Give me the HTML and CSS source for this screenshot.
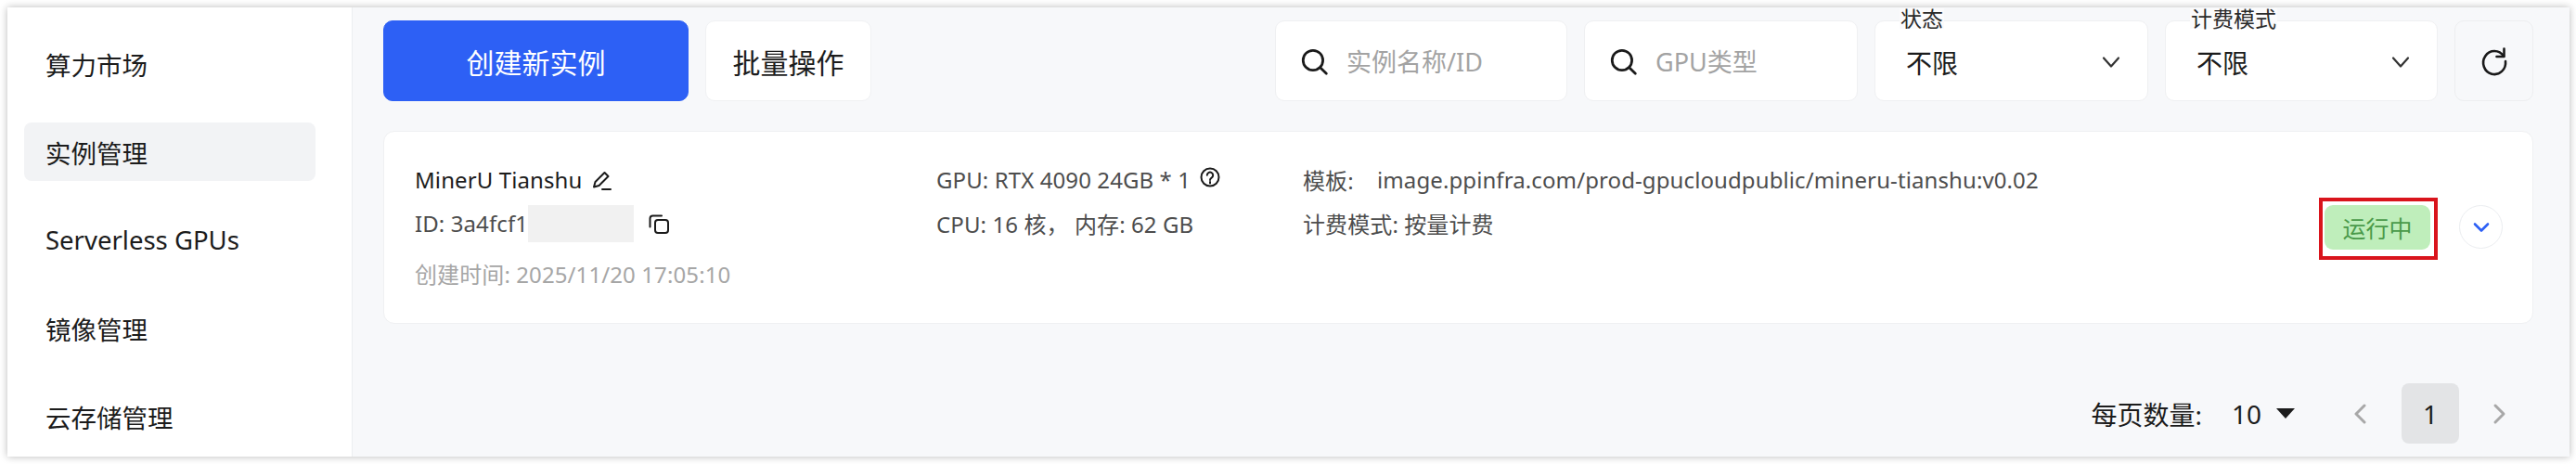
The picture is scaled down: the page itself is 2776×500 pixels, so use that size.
FILE: index.html
```html
<!DOCTYPE html>
<html>
<head>
	<meta charset="utf-8">
	<title>实例管理</title>
	<link rel="stylesheet" href="styles.css">
</head>
<body>
	<div class="window">
		<nav class="sidebar">
			<a class="nav-item">算力市场</a>
			<a class="nav-item active">实例管理</a>
			<a class="nav-item">Serverless GPUs</a>
			<a class="nav-item">镜像管理</a>
			<a class="nav-item">云存储管理</a>
		</nav>
		<main class="main">
			<div class="toolbar">
				<button class="btn btn-primary">创建新实例</button>
				<button class="btn btn-plain">批量操作</button>
				<div class="spacer"></div>
				<div class="field search search-name">
					<svg class="icon" width="32" height="32" viewBox="0 0 30 30"><circle cx="14" cy="14" r="10" /><path d="M21.500 21.500l6 6" /></svg>
					<span class="placeholder">实例名称/ID</span>
				</div>
				<div class="field search search-gpu">
					<svg class="icon" width="32" height="32" viewBox="0 0 30 30"><circle cx="14" cy="14" r="10" /><path d="M21.500 21.500l6 6" /></svg>
					<span class="placeholder">GPU类型</span>
				</div>
				<div class="field select select-state">
					<span class="select-label">状态</span>
					<span class="select-value">不限</span>
					<svg class="icon chevron" width="22" height="14" viewBox="0 0 22 14"><path d="M3 2.500l8 9 8-9" /></svg>
				</div>
				<div class="field select select-billing">
					<span class="select-label">计费模式</span>
					<span class="select-value">不限</span>
					<svg class="icon chevron" width="22" height="14" viewBox="0 0 22 14"><path d="M3 2.500l8 9 8-9" /></svg>
				</div>
				<button class="btn btn-refresh">
					<svg class="icon" width="34" height="34" viewBox="0 0 34 34"><path d="M27 11.500A12 12.500 0 1 0 29 17" /><path d="M27.500 3.500v8.500h-8" /></svg>
				</button>
			</div>

			<div class="card">
				<div class="col col-info">
					<div class="row">
						<span class="name">MinerU Tianshu</span>
						<svg class="icon small edit" width="24" height="24" viewBox="0 0 24 24"><path d="M4 18.500l1.500-5.500L15.500 3l4 4-10 10z" /><path d="M13 21h9" /></svg>
					</div>
					<div class="row muted">
						<span>ID: 3a4fcf1</span>
						<span class="mask"></span>
						<svg class="icon small copy" width="24" height="24" viewBox="0 0 24 24"><rect x="8" y="8" width="14" height="14" rx="3" /><path d="M15 3.500H5.500A3 3 0 0 0 2.500 6.500v9" /></svg>
					</div>
					<div class="row created">创建时间: 2025/11/20 17:05:10</div>
				</div>
				<div class="col col-spec">
					<div class="row muted">
						<span>GPU: RTX 4090 24GB * 1</span>
						<svg class="icon small help" width="22" height="22" viewBox="0 0 22 22"><circle cx="11" cy="11" r="9.500" /><path d="M7.800 8.800a3.200 3.200 0 1 1 4.800 2.800c-1 .6-1.600 1.100-1.600 2.400" /><path d="M11 16v1.500" /></svg>
					</div>
					<div class="row muted">CPU: 16 核， 内存: 62 GB</div>
				</div>
				<div class="col col-tpl">
					<div class="row muted">
						<span class="tpl-label">模板:</span>
						<span>image.ppinfra.com/prod-gpucloudpublic/mineru-tianshu:v0.02</span>
					</div>
					<div class="row muted">计费模式: 按量计费</div>
				</div>
				<div class="highlight">
					<span class="badge">运行中</span>
				</div>
				<button class="expand">
					<svg width="20" height="12" viewBox="0 0 20 12"><path d="M3 2.500l7 7 7-7" /></svg>
				</button>
			</div>

			<div class="pager">
				<span class="pager-label">每页数量:</span>
				<span class="pager-size">10</span>
				<span class="caret"></span>
				<svg class="arrow arrow-prev" width="16" height="24" viewBox="0 0 16 24"><path d="M13 3L4 12l9 9" /></svg>
				<span class="page-num">1</span>
				<svg class="arrow arrow-next" width="16" height="24" viewBox="0 0 16 24"><path d="M3 3l9 9-9 9" /></svg>
			</div>
		</main>
	</div>
</body>
</html>
```
FILE: styles.css
```css
html,body{
	margin: 0;
	padding: 0;
}
body{
	width: 2776px;
	height: 500px;
	padding: 8px 7px 8px 8px;
	box-sizing: border-box;
	background-color: #fff;
	overflow: hidden;
}
*{
	font-family: "Noto Sans", "Noto Sans CJK SC", sans-serif;
}
.window{
	display: flex;
	height: 484px;
	box-shadow: 0 0 8px rgba(0,0,0,0.28);
	background-color: #f7f8fa;
}
.sidebar{
	width: 372px;
	box-sizing: border-box;
	flex: none;
	padding: 29px 39px 0 18px;
	background-color: #fff;
	border-right: 1px solid #eceef0;
	display: flex;
	flex-direction: column;
	gap: 32px;
	overflow: hidden;
}
.nav-item{
	display: flex;
	flex: none;
	align-items: center;
	height: 63px;
	padding-left: 23px;
	border-radius: 8px;
	font-size: 27.500px;
	color: #1c1c1c;
}
.active{
	background-color: #f2f3f5;
}
.main{
	flex: 1;
	min-width: 0;
	padding: 14px 39px 0 33px;
	display: flex;
	flex-direction: column;
}
.toolbar{
	display: flex;
	align-items: stretch;
	height: 87px;
}
.spacer{
	flex: 1;
}
.btn{
	border: 1px solid #f0f1f3;
	border-radius: 10px;
	background-color: #fff;
	padding: 0;
	font-size: 30px;
	color: #1c1c1c;
}
.btn-primary{
	width: 329px;
	background-color: #2d60f5;
	border-color: #2d60f5;
	color: #fff;
}
.btn-plain{
	width: 179px;
	margin-left: 18px;
}
.btn-refresh{
	width: 85px;
	margin-left: 18px;
	background-color: #f7f8fa;
	border-color: #edeef0;
	display: flex;
	align-items: center;
	justify-content: center;
}
.field{
	position: relative;
	display: flex;
	align-items: center;
	box-sizing: border-box;
	background-color: #fff;
	border: 1px solid #eff0f2;
	border-radius: 10px;
}
.search{
	padding-left: 25px;
	gap: 19px;
}
.search-name{
	width: 315px;
}
.search-gpu{
	width: 295px;
	margin-left: 18px;
}
.placeholder{
	font-size: 27px;
	color: #a3a3a3;
}
.select{
	margin-left: 18px;
	padding: 2px 28px 0 33px;
	justify-content: space-between;
}
.select-state{
	width: 295px;
}
.select-billing{
	width: 294px;
}
.select-label{
	position: absolute;
	left: 26px;
	top: -14px;
	padding: 0 1px;
	line-height: 22px;
	font-size: 23px;
	color: #2a2a2a;
	background-color: #fbfbfc;
}
.select-value{
	font-size: 28px;
	color: #1c1c1c;
}
.icon{
	flex: none;
	fill: none;
	stroke: #1a1a1a;
	stroke-width: 2.6;
	stroke-linecap: round;
	stroke-linejoin: round;
}
.small{
	stroke-width: 2;
}
.chevron{
	stroke: #333;
	stroke-width: 2.2;
}
.card{
	display: flex;
	align-items: flex-start;
	box-sizing: border-box;
	height: 208px;
	margin-top: 32px;
	padding: 28px 32px 0 33px;
	background-color: #fff;
	border: 1px solid #eff0f2;
	border-radius: 12px;
}
.col{
	flex: none;
}
.col-info{
	width: 562px;
}
.col-spec{
	width: 395px;
}
.col-tpl{
	flex: 1;
}
.row{
	display: flex;
	align-items: center;
	height: 47px;
	font-size: 24px;
	letter-spacing: 0.1px;
	color: #555;
	white-space: nowrap;
}
.muted{
	color: #4d4d4d;
}
.name{
	color: #1c1c1c;
}
.edit{
	margin-left: 9px;
	margin-top: 3px;
}
.mask{
	width: 114px;
	height: 40px;
	background-color: #f1f1f1;
}
.copy{
	margin-left: 15px;
}
.help{
	margin-left: 10px;
	margin-top: -5px;
}
.created{
	margin-top: 7px;
	color: #a6a6a6;
}
.tpl-label{
	width: 80px;
}
.highlight{
	flex: none;
	margin-top: 43px;
	padding: 4px 4px 7px 2px;
	border: 4px solid #d9141c;
	box-sizing: border-box;
	width: 128px;
	height: 67px;
}
.badge{
	display: flex;
	align-items: center;
	justify-content: center;
	height: 48px;
	border-radius: 9px;
	background-color: #bfeebb;
	font-size: 25px;
	color: #4a9a4a;
}
.expand{
	flex: none;
	width: 47px;
	height: 47px;
	margin: 51px 0 0 23px;
	padding: 0;
	border: 1px solid #ebedf0;
	border-radius: 50%;
	background-color: #fff;
	display: flex;
	align-items: center;
	justify-content: center;
}
.expand path{
	fill: none;
	stroke: #2d60f5;
	stroke-width: 2.6;
	stroke-linecap: round;
	stroke-linejoin: round;
}
.pager{
	display: flex;
	align-items: center;
	justify-content: flex-end;
	height: 65px;
	margin-top: 64px;
	font-size: 28px;
	color: #1c1c1c;
}
.pager-size{
	margin-left: 32px;
	font-size: 28px;
}
.caret{
	width: 0;
	height: 0;
	margin-left: 16px;
	border-left: 10px solid transparent;
	border-right: 10px solid transparent;
	border-top: 11px solid #1c1c1c;
}
.arrow{
	fill: none;
	stroke: #a8a8a8;
	stroke-width: 3;
	stroke-linecap: round;
	stroke-linejoin: round;
}
.arrow-prev{
	margin-left: 62px;
}
.page-num{
	display: flex;
	align-items: center;
	justify-content: center;
	width: 62px;
	height: 65px;
	margin-left: 37px;
	border-radius: 8px;
	background-color: #e3e4e6;
	font-size: 28px;
}
.arrow-next{
	margin-left: 36px;
	margin-right: 28px;
}
```
